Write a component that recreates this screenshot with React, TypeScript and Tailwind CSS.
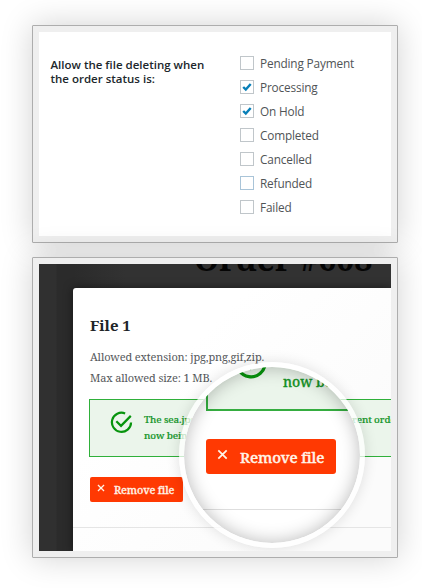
import type { ReactNode } from 'react';

const statuses = [
  { label: 'Pending Payment', checked: false },
  { label: 'Processing', checked: true },
  { label: 'On Hold', checked: true },
  { label: 'Completed', checked: false },
  { label: 'Cancelled', checked: false },
  { label: 'Refunded', checked: false, hover: true },
  { label: 'Failed', checked: false },
];

const serif = "font-['Noto_Serif','Droid_Serif','DejaVu_Serif_Condensed','DejaVu_Serif',serif]";

function Frame({ children, height }: { children: ReactNode; height: string }) {
  return (
    <section className={`w-[366px] shrink-0 rounded-[1px] border border-[#adadad] bg-[#efefef] p-[6px] shadow-[0_0_32px_rgba(0,0,0,0.18)] ${height}`}>
      {children}
    </section>
  );
}

function Cross({ size }: { size: number }) {
  return (
    <svg width={size} height={size} viewBox="0 0 10 10" fill="none" stroke="#fff4e8" strokeWidth="1.6">
      <path d="M1.2 1.2 8.8 8.8M8.8 1.2 1.2 8.8" />
    </svg>
  );
}

function CheckCircle({ size }: { size: number }) {
  return (
    <svg width={size} height={size} viewBox="0 0 24 24" fill="none" stroke="#07940d" strokeWidth="2.3">
      <path d="M15.8 2.5A10 10 0 1 0 22 12" />
      <path d="m6.6 10.6 4.9 4.9L21.7 5.1" />
    </svg>
  );
}

export default function App() {
  return (
    <main className="flex h-[588px] w-[422px] flex-col gap-[14px] overflow-hidden bg-white pl-8 pt-[25px]">
      <Frame height="h-[218px]">
        <div className="flex h-full bg-white pl-[11px] pt-[19px] font-['Open_Sans',sans-serif]">
          <h2 className="mt-[7px] w-[190px] whitespace-nowrap pl-[0.5px] text-[11.5px] font-semibold leading-[14px] text-[#20272c]">
            Allow the file deleting when<br />the order status is:
          </h2>
          <ul>
            {statuses.map(({ label, checked, hover }) => (
              <li key={label} className="flex h-6 items-center gap-[6px]">
                <span className={`flex size-[14px] items-center justify-center border bg-white ${hover ? 'border-[#a9c4d8]' : 'border-[#c0c6ca]'}`}>
                  {checked && (
                    <svg width="10" height="10" viewBox="0 0 10 10" fill="none" stroke="#087fb8" strokeWidth="2.4">
                      <path d="m1.2 5 2.6 2.6L8.7 2" />
                    </svg>
                  )}
                </span>
                <span className="whitespace-nowrap text-[11.8px] leading-6 tracking-[-0.16px] text-[#505456]">{label}</span>
              </li>
            ))}
          </ul>
        </div>
      </Frame>

      <Frame height="h-[301px]">
        <div className={`relative h-full overflow-hidden bg-[linear-gradient(90deg,#303030_0_17px,#2b2b2b_18px_34px,#323232_86px)] ${serif}`}>
          <div className="absolute left-[155px] top-[-25px] whitespace-nowrap text-[32px] font-bold leading-10 text-[#050505]">Order #608</div>
          <div className="ml-[34px] mt-[24px] h-[263px] w-[318px] overflow-hidden rounded-tl-[3px] bg-[linear-gradient(135deg,#fff_30%,#fbfbfb_80%)] shadow-[0_0_10px_rgba(0,0,0,0.5)]">
            <div className="h-[240px] border-b border-[#e5e5e5] pl-[16px] pt-[25px]">
              <h1 className="pl-px text-[15px] font-bold leading-6 text-[#202428]">File 1</h1>
              <div className="mt-[10px] whitespace-nowrap pl-px text-[11px] leading-[20px] tracking-[-0.14px] text-[#55585b]">
                <p>Allowed extension: jpg,png,gif,zip.</p>
                <p className="pt-px">Max allowed size: 1 MB.</p>
              </div>
              <div className="mt-[11px] flex h-[58px] w-[330px] border border-[#2fb03a] bg-[#ebf5eb] pl-[20px] pt-[11px] text-[#15952a]">
                <CheckCircle size={23} />
                <p className="ml-[11px] mt-[1px] w-[260px] whitespace-nowrap text-[9.8px] font-medium leading-4 tracking-[-0.1px] [-webkit-text-stroke:0.2px_currentColor]">
                  <span className="inline-block w-[208px]">The sea.jpg file is</span>rent order<br />now being processed
                </p>
              </div>
              <button className="ml-px mt-[20px] flex h-[25px] w-[93px] items-center whitespace-nowrap rounded-[2px] bg-[#ff3902] pl-[7px] text-[10.8px] font-medium text-[#fff4e8]">
                <span className="-mt-[3px]"><Cross size={8} /></span><span className="ml-[9px] pt-px tracking-[-0.15px] [-webkit-text-stroke:0.3px_currentColor]">Remove file</span>
              </button>
            </div>
          </div>

          <div className="absolute left-[140px] top-[98px] size-[186px] rounded-full bg-white/75 p-[5px] shadow-[0_0_14px_rgba(0,0,0,0.12)]">
            <div className="relative size-[176px] overflow-hidden rounded-full bg-white">
              <div className="ml-[22px] h-[44px] w-[180px] border-b-2 border-l-2 border-[#35ad40] bg-[#ebf5eb]" />
              <div className="absolute left-[50px] top-[-21px]"><CheckCircle size={34} /></div>
              <span className="absolute left-[99px] top-[5px] whitespace-nowrap text-[14px] font-medium leading-5 text-[#159326] [-webkit-text-stroke:0.3px_currentColor]">now being</span>
              <button className="ml-[22px] mt-[28px] flex h-[35px] w-[130px] items-center whitespace-nowrap rounded-[3px] bg-[#ff3902] pl-[11px] text-[15px] font-medium text-[#fff4e8]">
                <span className="-mt-[4px]"><Cross size={11} /></span><span className="ml-[12px] pt-px tracking-[-0.15px] [-webkit-text-stroke:0.4px_currentColor]">Remove file</span>
              </button>
              <div className="mt-[35px] h-px bg-[#dedede]" />
              <div className="absolute inset-0 rounded-full shadow-[inset_0_0_18px_rgba(0,0,0,0.28)]" />
            </div>
          </div>
        </div>
      </Frame>
    </main>
  );
}
